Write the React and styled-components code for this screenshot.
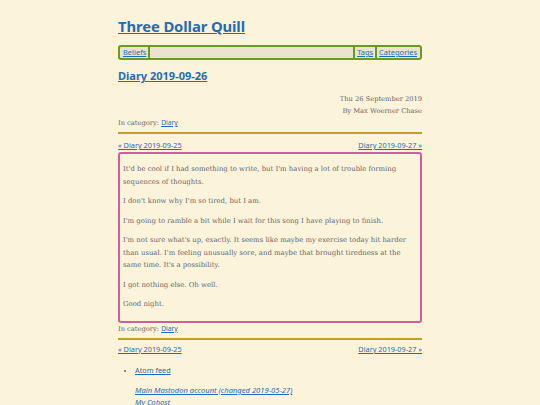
import styled, { createGlobalStyle } from 'styled-components'

const GlobalStyle = createGlobalStyle`
  html, body {
    margin: 0;
    padding: 0;
    background: #fcf3db;
  }
  body {
    font-family: "DejaVu Serif", serif;
    color: #666;
  }
`

const Page = styled.div`
  width: 304px;
  margin: 0 auto;
  padding-top: 15px;
`

const Title = styled.h1`
  margin: 0 0 8px;
  font-family: "Noto Sans", "Open Sans", sans-serif;
  font-size: 14.8px;
  line-height: 22px;
  font-weight: 700;
  letter-spacing: -0.1px;
`

const SansLink = styled.a`
  font-family: "Noto Sans", "Open Sans", sans-serif;
  color: #1f6db4;
  text-decoration: underline;
  font-style: ${p => (p.$italic ? 'italic' : 'normal')};
`

const Nav = styled.nav`
  display: flex;
  align-items: center;
  height: 11px;
  border: 2px solid #6b9a22;
  border-radius: 3px;
  background: #ebe3cf;
  font-size: 7.5px;
  line-height: 11px;
  padding: 0 1px;
`

const NavItem = styled.span`
  padding: 0 2px;
  border-left: ${p => (p.$left ? '2px solid #6b9a22' : 'none')};
  border-right: ${p => (p.$right ? '2px solid #6b9a22' : 'none')};
  height: 100%;
`

const Spacer = styled.div`
  flex: 1;
`

const PostTitle = styled.h2`
  margin: 8px 0 0;
  font-family: "Noto Sans", "Open Sans", sans-serif;
  font-size: 11px;
  line-height: 16px;
  font-weight: 700;
`

const Meta = styled.div`
  margin-top: 9px;
  text-align: right;
  font-size: 6.7px;
  line-height: 12px;
`

const Line = styled.div`
  font-size: 6.7px;
  line-height: 12px;
`

const Rule = styled.hr`
  margin: 3px 0 0;
  border: none;
  height: 2px;
  background: #c29f2c;
`

const PrevNext = styled.div`
  display: flex;
  justify-content: space-between;
  margin-top: ${p => p.$gap}px;
  font-size: 7.3px;
  line-height: 12px;
`

const Article = styled.article`
  margin-top: 1px;
  border: 2px solid #cf5f9c;
  border-radius: 3px;
  padding: 9px 2px 3px 3px;
`

const Para = styled.p`
  margin: 0 0 7px;
  font-size: 6.9px;
  line-height: 12.5px;
`

const Links = styled.ul`
  margin: 9px 0 0;
  padding-left: 17px;
  font-size: 7.3px;
  line-height: 12px;
  li::marker {
    color: #666;
  }
`

const Social = styled.div`
  margin: 7px 0 0 17px;
  font-size: 7.6px;
  line-height: 12px;
  display: flex;
  flex-direction: column;
  align-items: flex-start;
`

const paragraphs = [
  "It'd be cool if I had something to write, but I'm having a lot of trouble forming sequences of thoughts.",
  "I don't know why I'm so tired, but I am.",
  "I'm going to ramble a bit while I wait for this song I have playing to finish.",
  "I'm not sure what's up, exactly. It seems like maybe my exercise today hit harder than usual. I'm feeling unusually sore, and maybe that brought tiredness at the same time. It's a possibility.",
  "I got nothing else. Oh well.",
  "Good night.",
]

const PrevNextLinks = ({ gap }) => (
  <PrevNext $gap={gap}>
    <SansLink href="#">« Diary 2019-09-25</SansLink>
    <SansLink href="#">Diary 2019-09-27 »</SansLink>
  </PrevNext>
)

const App = () => (
  <>
    <GlobalStyle />
    <Page>
      <Title><SansLink href="#">Three Dollar Quill</SansLink></Title>
      <Nav>
        <NavItem $right><SansLink href="#">Beliefs</SansLink></NavItem>
        <Spacer />
        <NavItem $left><SansLink href="#">Tags</SansLink></NavItem>
        <NavItem $left><SansLink href="#">Categories</SansLink></NavItem>
      </Nav>
      <PostTitle><SansLink href="#">Diary 2019-09-26</SansLink></PostTitle>
      <Meta>
        <div>Thu 26 September 2019</div>
        <div>By Max Woerner Chase</div>
      </Meta>
      <Line>In category: <SansLink href="#">Diary</SansLink></Line>
      <Rule />
      <PrevNextLinks gap={5} />
      <Article>
        {paragraphs.map((text, i) => <Para key={i}>{text}</Para>)}
      </Article>
      <Line>In category: <SansLink href="#">Diary</SansLink></Line>
      <Rule />
      <PrevNextLinks gap={3} />
      <Links>
        <li><SansLink href="#">Atom feed</SansLink></li>
      </Links>
      <Social>
        <SansLink href="#" $italic>Main Mastodon account (changed 2019-05-27)</SansLink>
        <SansLink href="#" $italic>My Cohost</SansLink>
      </Social>
    </Page>
  </>
)

export default App
